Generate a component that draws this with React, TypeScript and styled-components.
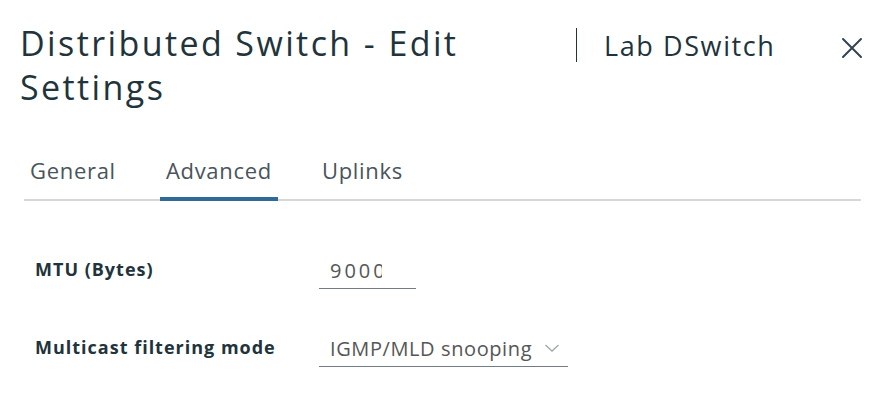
import * as React from 'react';
import styled, { createGlobalStyle } from 'styled-components';

const TABS = ['General', 'Advanced', 'Uplinks'];

const App = () => {
    const [active, setActive] = React.useState(1);

    return (
        <>
            <GlobalStyle />
            <Page>
                <Header>
                    <Title>Distributed Switch - Edit Settings</Title>
                    <Subject>Lab DSwitch</Subject>
                    <CloseButton aria-label="Close">
                        <svg width="22" height="22" viewBox="0 0 22 22">
                            <path
                                d="M2 2 L20 20 M20 2 L2 20"
                                stroke="#314351"
                                strokeWidth="2"
                                strokeLinecap="round"
                                fill="none"
                            />
                        </svg>
                    </CloseButton>
                </Header>

                <TabList>
                    {TABS.map((tab, i) => (
                        <Tab
                            key={tab}
                            $active={i === active}
                            onClick={() => setActive(i)}
                        >
                            {tab}
                        </Tab>
                    ))}
                </TabList>

                <Form>
                    <Row>
                        <Label>MTU (Bytes)</Label>
                        <InputWrap>
                            <TextInput readOnly value="9000" />
                        </InputWrap>
                    </Row>
                    <Row>
                        <Label>Multicast filtering mode</Label>
                        <Select>
                            <span>IGMP/MLD snooping</span>
                            <svg width="16" height="10" viewBox="0 0 16 10">
                                <path
                                    d="M1.5 2 L8 8 L14.5 2"
                                    stroke="#a3a8ab"
                                    strokeWidth="1.3"
                                    fill="none"
                                />
                            </svg>
                        </Select>
                    </Row>
                </Form>
            </Page>
        </>
    );
};

const GlobalStyle = createGlobalStyle`
    body {
        margin: 0;
        background: #ffffff;
        font-family: 'Open Sans', 'Noto Sans', sans-serif;
    }
`;

const Page = styled.div`
    width: 882px;
    height: 404px;
    box-sizing: border-box;
    padding: 21px 19px 0 20px;
`;

const Header = styled.div`
    display: flex;
    align-items: flex-start;
`;

const Title = styled.h1`
    margin: 0;
    width: 556px;
    font-size: 34px;
    line-height: 44px;
    font-weight: 400;
    letter-spacing: 2.4px;
    color: #21333b;
`;

const Subject = styled.div`
    margin-top: 7px;
    height: 34px;
    padding-left: 27px;
    border-left: 1px solid #21333b;
    display: flex;
    align-items: center;
    font-size: 27px;
    letter-spacing: 1.6px;
    color: #21333b;
`;

const CloseButton = styled.button`
    margin: 16px 0 0 auto;
    padding: 0;
    border: none;
    background: none;
    line-height: 0;
    cursor: pointer;
`;

const TabList = styled.div`
    display: flex;
    gap: 38px;
    margin: 33px 2px 0 4px;
    padding-left: 0;
    border-bottom: 2px solid #d7d7d7;
`;

const Tab = styled.button<{ $active: boolean }>`
    margin-bottom: -2px;
    padding: 0 6px;
    height: 59px;
    border: none;
    border-bottom: 4px solid ${({ $active }) => ($active ? '#2f6b98' : 'transparent')};
    background: none;
    font-family: inherit;
    font-size: 22px;
    line-height: 24px;
    letter-spacing: 0.7px;
    color: #49545b;
    cursor: pointer;
`;

const Form = styled.div`
    display: flex;
    flex-direction: column;
    gap: 41px;
    padding: 51px 0 0 15px;
`;

const Row = styled.div`
    display: grid;
    grid-template-columns: 284px auto;
    align-items: center;
`;

const Label = styled.div`
    margin-bottom: 3px;
    font-size: 18px;
    font-weight: 700;
    letter-spacing: 1px;
    color: #21333b;
`;

const InputWrap = styled.div`
    width: 97px;
    height: 37px;
    box-sizing: border-box;
    padding-left: 11px;
    border-bottom: 1px solid #737c82;
    display: flex;
    align-items: center;
`;

const TextInput = styled.input`
    width: 52px;
    padding: 0;
    border: none;
    outline: none;
    background: transparent;
    font-family: inherit;
    font-size: 20px;
    letter-spacing: 3px;
    color: #565656;
`;

const Select = styled.div`
    width: 249px;
    height: 37px;
    box-sizing: border-box;
    padding: 0 8px 0 11px;
    border-bottom: 1px solid #737c82;
    display: flex;
    align-items: center;
    justify-content: space-between;
    font-size: 20px;
    letter-spacing: 0.6px;
    color: #565656;
    cursor: pointer;
`;

export default App;
